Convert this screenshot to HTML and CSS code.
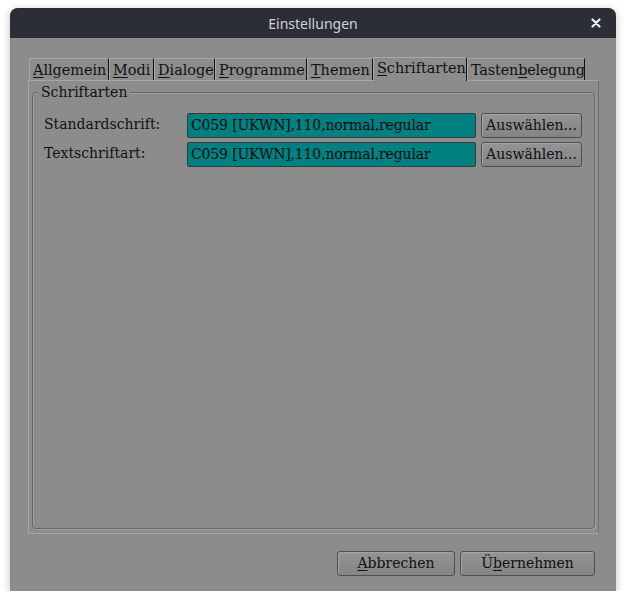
FILE: index.html
```html
<!DOCTYPE html>
<html lang="de">
<head>
<meta charset="utf-8">
<title>Einstellungen</title>
<link rel="stylesheet" href="styles.css">
</head>
<body>
<div class="window">
  <div class="titlebar">
    <span class="title">Einstellungen</span>
    <svg class="close" width="10" height="10" viewBox="0 0 10 10"><path d="M1.5 1.5L8.5 8.5M8.5 1.5L1.5 8.5" stroke="#eceff4" stroke-width="2.2" stroke-linecap="round"/></svg>
  </div>
  <div class="content">
    <div class="notebook">
      <div class="tabs">
        <div class="tab t-allg"><u>A</u>llgemein</div>
        <div class="tab t-modi"><u>M</u>odi</div>
        <div class="tab t-dial"><u>D</u>ialoge</div>
        <div class="tab t-prog"><u>P</u>rogramme</div>
        <div class="tab t-them"><u>T</u>hemen</div>
        <div class="tab t-schr selected"><u>S</u>chriftarten</div>
        <div class="tab t-tast">Tasten<u>b</u>elegung</div>
      </div>
      <div class="panel">
        <div class="group">
          <div class="legend">Schriftarten</div>
          <div class="rows">
            <div class="row">
              <span class="label">Standardschrift:</span>
              <div class="field">C059 [UKWN],110,normal,regular</div>
              <div class="btn pick">Auswählen...</div>
            </div>
            <div class="row">
              <span class="label">Textschriftart:</span>
              <div class="field">C059 [UKWN],110,normal,regular</div>
              <div class="btn pick">Auswählen...</div>
            </div>
          </div>
        </div>
      </div>
    </div>
    <div class="actions">
      <div class="btn action cancel"><u>A</u>bbrechen</div>
      <div class="btn action apply">Ü<u>b</u>ernehmen</div>
    </div>
  </div>
</div>
</body>
</html>
```
FILE: styles.css
```css
html, body {
  margin: 0;
  padding: 0;
  background: #ffffff;
}
* {
  box-sizing: border-box;
}
body {
  padding: 8px 0 0 10px;
}
.window {
  width: 606px;
  height: 583px;
  background: #8c8c8c;
  border-radius: 8px 8px 0 0;
  box-shadow: 0 2px 8px rgba(0,0,0,0.25);
  display: flex;
  flex-direction: column;
  overflow: hidden;
}
.titlebar {
  height: 30px;
  flex: none;
  background: #2b2e37;
  display: flex;
  align-items: center;
  justify-content: center;
  position: relative;
}
.title {
  font-family: "Noto Sans", sans-serif;
  font-size: 14px;
  color: #cfd1d6;
}
.close {
  position: absolute;
  right: 15px;
  top: 10px;
}
.content {
  flex: 1;
  display: flex;
  flex-direction: column;
  padding: 18px 17px 15px 18px;
  font-family: "DejaVu Serif", serif;
  font-size: 14px;
  color: #111;
}
u {
  text-decoration-thickness: 1px;
  text-underline-offset: 2px;
}
.notebook {
  display: flex;
  flex-direction: column;
  height: 478px;
}
.tabs {
  display: flex;
  padding-left: 1px;
  align-items: flex-end;
  height: 24px;
}
.tab {
  height: 22px;
  line-height: 22px;
  padding: 0 0 0 3px;
  font-size: 14.4px;
  border-top: 1px solid #a8a8a8;
  border-left: 1px solid #a8a8a8;
  border-right: 1px solid #111;
  white-space: nowrap;
  overflow: hidden;
}
.t-allg { width: 80px; }
.t-modi { width: 45px; }
.t-dial { width: 61px; }
.t-prog { width: 92px; }
.t-them { width: 66px; }
.t-schr { width: 94px; }
.t-tast { width: 118px; letter-spacing: -0.15px; }
.tab.selected {
  height: 24px;
  line-height: 20px;
  margin-bottom: -1px;
  position: relative;
  background: #8c8c8c;
  z-index: 1;
}
.panel {
  flex: 1;
  border: 1px solid #a6a6a6;
  border-right-color: #707070;
  border-bottom-color: #a6a6a6;
  padding: 11px 3px 4px 3px;
  display: flex;
}
.group {
  flex: 1;
  border: 1px solid #666;
  border-radius: 4px;
  box-shadow: 1px 1px 0 #a0a0a0, inset 1px 1px 0 #a0a0a0;
  position: relative;
  padding: 20px 10px 0 11px;
}
.legend {
  position: absolute;
  left: 5px;
  top: -10px;
  background: #8c8c8c;
  padding: 0 3px;
  line-height: 18px;
}
.rows {
  display: flex;
  flex-direction: column;
  gap: 4px;
}
.row {
  display: flex;
  align-items: center;
  height: 25px;
}
.label {
  width: 143px;
  flex: none;
  position: relative;
  top: -2px;
}
.field {
  width: 289px;
  height: 25px;
  line-height: 23px;
  background: #008080;
  border: 1px solid #3a3a3a;
  border-radius: 2px;
  padding-left: 3px;
  white-space: nowrap;
  color: #0a0a0a;
  letter-spacing: -0.15px;
}
.btn {
  height: 25px;
  line-height: 23px;
  border: 1px solid #4e4e4e;
  border-radius: 3px;
  background: linear-gradient(#949494, #848484);
  box-shadow: inset 1px 1px 0 #a4a4a4;
  text-align: center;
  white-space: nowrap;
}
.pick {
  margin-left: 5px;
  width: 101px;
}
.actions {
  margin-top: auto;
  display: flex;
  justify-content: flex-end;
  gap: 5px;
  padding-right: 4px;
  padding-bottom: 0;
}
.cancel {
  width: 118px;
}
.apply {
  width: 135px;
}
```
